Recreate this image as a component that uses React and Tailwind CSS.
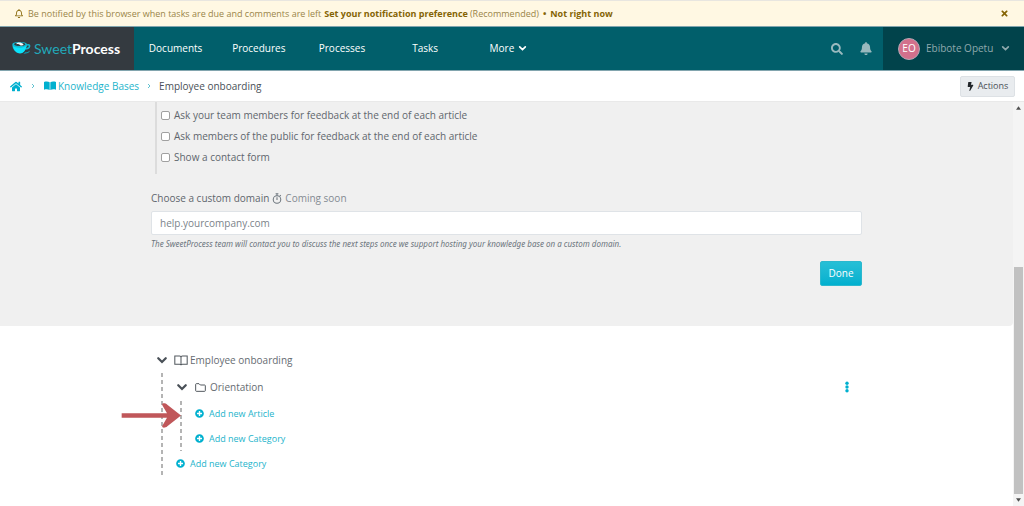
import React from 'react';
import { FaHome, FaSearch, FaBell, FaRegBell, FaPlusCircle, FaBolt, FaTimes } from 'react-icons/fa';

const NAV = ['Documents', 'Procedures', 'Processes', 'Tasks'];

const FEEDBACK_OPTIONS = [
  { id: 'team', label: 'Ask your team members for feedback at the end of each article' },
  { id: 'public', label: 'Ask members of the public for feedback at the end of each article' },
  { id: 'contact', label: 'Show a contact form' },
];

function CupLogo() {
  return (
    <svg viewBox="0 0 54 42" className="w-[19px] h-[15px]">
      <path d="M1 8C4 1 40 1 43 9c6-2 10 1 9 6-1 6-8 9-14 9-4 6-9 10-15 10C9 34 0 20 1 8z" fill="#12b9d2" />
      <path d="M3 14c8 7 29 6 38-1-2 14-9 22-18 22C12 35 5 26 3 14z" fill="#0be3fb" />
      <path d="M43 13c4-1 5 1 4 3-1 2-4 3-7 4z" fill="#343a40" />
      <ellipse cx="22" cy="9" rx="16" ry="5" fill="#343a40" />
      <path d="M12 8c4-6 14-5 21 1-3 5-9 4-11 1-3-2-7-1-10-2z" fill="#f4fbfc" />
      <path d="M38 32c5 0 9-1 13-5-1 6-8 9-19 9z" fill="#12a0b5" />
    </svg>
  );
}

function ChevronDown({ className }) {
  return (
    <svg viewBox="0 0 16 12" className={className} fill="none" stroke="currentColor" strokeWidth="3" strokeLinecap="round">
      <path d="M3 3l5 5 5-5" />
    </svg>
  );
}

function ChevronRight() {
  return (
    <svg viewBox="0 0 8 12" className="w-1 h-[6px] mx-2" fill="none" stroke="#62c2d0" strokeWidth="2">
      <path d="M2 2l4 4-4 4" />
    </svg>
  );
}

function BookSolid() {
  return (
    <svg viewBox="0 0 36 28" className="w-3 h-[10px]" fill="#00b0cf">
      <path d="M0 2c6-2 13-2 17 1v23c-5-3-11-3-17-1z" />
      <path d="M36 2c-6-2-13-2-17 1v23c5-3 11-3 17-1z" />
    </svg>
  );
}

function BookOutline() {
  return (
    <svg viewBox="0 0 40 32" className="w-[14px] h-[11px]" fill="none" stroke="#52585e" strokeWidth="3">
      <path d="M2 3h14c2 0 4 2 4 4 0-2 2-4 4-4h14v24H24c-2 0-4 1-4 3 0-2-2-3-4-3H2zM20 7v23" />
    </svg>
  );
}

function FolderOutline() {
  return (
    <svg viewBox="0 0 33 27" className="w-[11px] h-[9px]" fill="none" stroke="#52585e" strokeWidth="3" strokeLinejoin="round">
      <path d="M2 23V4c0-1 1-2 2-2h8l4 4h13c1 0 2 1 2 2v15c0 1-1 2-2 2H4c-1 0-2-1-2-2z" />
    </svg>
  );
}

function Stopwatch() {
  return (
    <svg viewBox="0 0 28 32" className="w-[10px] h-[11px]" fill="none" stroke="#6c757d" strokeWidth="3">
      <circle cx="14" cy="19" r="11" />
      <path d="M10 2h8M14 2v6M14 12v8M22 9l3-3" />
    </svg>
  );
}

function ScrollArrow({ up }) {
  return (
    <svg viewBox="0 0 6 4" className="w-[5px] h-1" fill="#505050">
      <path d={up ? 'M0 4l3-4 3 4z' : 'M0 0l3 4 3-4z'} />
    </svg>
  );
}

function AddLink({ children }) {
  return (
    <a href="#add" className="flex items-center gap-[5px] h-[25px] text-[9px] text-[#1db4cb]">
      <FaPlusCircle className="w-[9px] h-[9px] text-[#00b0cf]" />
      {children}
    </a>
  );
}

function DashedBranch({ children }) {
  return (
    <div className="relative pl-[15px] ml-[10px]">
      <svg className="absolute left-0 top-0 w-[2px] h-full" aria-hidden="true">
        <line x1="1" y1="0" x2="1" y2="100%" stroke="#b4b4b4" strokeWidth="2" strokeDasharray="4 3" />
      </svg>
      {children}
    </div>
  );
}

function TopBanner() {
  return (
    <div className="flex items-center justify-between h-[26px] pl-[15px] pr-4 bg-[#fff8e3] border-t border-[#e8e6e0] text-[9px] text-[#9a8548]">
      <div className="flex items-center whitespace-nowrap">
        <FaRegBell className="w-2 h-[9px] mr-[5px] text-[#856404]" />
        <span>Be notified by this browser when tasks are due and comments are left</span>
        <a href="#preference" className="ml-[3px] font-bold text-[#856404]">Set your notification preference</a>
        <span className="ml-[2px]">(Recommended)</span>
        <span className="mx-1 font-bold text-[#856404]">•</span>
        <a href="#later" className="font-bold text-[#856404]">Not right now</a>
      </div>
      <button aria-label="Close">
        <FaTimes className="w-[7px] h-[9px] text-[#856404]" />
      </button>
    </div>
  );
}

function Header() {
  return (
    <header className="flex h-[45px] bg-[#015f6b] border-y border-[#82a5ae] text-white">
      <a href="#home" className="flex items-center gap-[3px] w-[134px] pl-3 bg-[#343a40]">
        <CupLogo />
        <span className="font-[Lato] text-[14px] text-[#22a9ba]">
          Sweet<b className="font-bold text-white">Process</b>
        </span>
      </a>
      <nav className="grid grid-cols-5 w-[416px] font-medium">
        {NAV.map((n) => (
          <a key={n} href={`#${n}`} className="flex items-center justify-center">{n}</a>
        ))}
        <button className="flex items-center justify-center gap-1">
          More
          <ChevronDown className="w-[9px] h-[7px]" />
        </button>
      </nav>
      <div className="flex items-center gap-[17px] ml-auto mr-[11px] text-[#99b9be]">
        <button aria-label="Search"><FaSearch className="w-3 h-3" /></button>
        <button aria-label="Notifications"><FaBell className="w-3 h-[13px]" /></button>
      </div>
      <button className="flex items-center w-[141px] pl-[15px] bg-[#01434b] text-[#8fa9ad]">
        <span className="flex items-center justify-center w-[22px] h-[22px] mr-[6px] rounded-full bg-[#d3708c] border border-[#b5a7b4] text-white">EO</span>
        Ebibote Opetu
        <ChevronDown className="w-[9px] h-[7px] ml-2" />
      </button>
    </header>
  );
}

function Breadcrumbs() {
  return (
    <div className="flex items-center justify-between h-[31px] pl-[10px] pr-[9px] border-b border-[#e9e9e9]">
      <div className="flex items-center">
        <a href="#home" aria-label="Home"><FaHome className="w-3 h-[11px] text-[#00b0cf]" /></a>
        <span className="mx-px"><ChevronRight /></span>
        <a href="#kb" className="flex items-center gap-[2px] text-[#1db4cb]">
          <BookSolid />
          Knowledge Bases
        </a>
        <ChevronRight />
        <span className="font-medium text-[#495057]">Employee onboarding</span>
      </div>
      <button className="flex items-center justify-center gap-1 w-[55px] h-[21px] rounded-[2px] bg-[#e9ecef] border border-[#dde1e5] text-[9px] text-[#495057]">
        <FaBolt className="w-[7px] h-[9px] text-[#212529]" />
        Actions
      </button>
    </div>
  );
}

function Settings() {
  return (
    <section className="h-[224px] bg-[#f0f0f0] rounded-br">
      <div className="w-full max-w-[711px] mx-auto text-[#5f666d]">
        <div className="ml-1 pl-1 h-[72px] pt-[3px] border-l-2 border-[#dcdcdc]">
          {FEEDBACK_OPTIONS.map((o) => (
            <div key={o.id} className="flex items-center gap-1 h-[21px]">
              <input id={o.id} type="checkbox" className="appearance-none w-[9px] h-[9px] bg-white border border-[#a0a0a0] rounded-[2px]" />
              <label htmlFor={o.id}>{o.label}</label>
            </div>
          ))}
        </div>
        <label htmlFor="domain" className="flex items-center h-4 mt-4 mb-[5px]">
          Choose a custom domain
          <span className="flex items-center gap-[3px] ml-[3px] text-[#848b92]">
            <Stopwatch />
            Coming soon
          </span>
        </label>
        <input
          id="domain"
          type="text"
          placeholder="help.yourcompany.com"
          className="block w-full h-[24px] px-2 bg-white border border-[#dfe3e7] rounded-[2px] placeholder:text-[#7b838a]"
        />
        <p className="h-4 mt-[1px] leading-4 font-['Noto_Sans',sans-serif] text-[8px] italic text-[#6c757d]">
          The SweetProcess team will contact you to discuss the next steps once we support hosting your knowledge base on a custom domain.
        </p>
        <div className="flex justify-end mt-[9px]">
          <button className="w-[42px] h-[25px] rounded-[2px] border border-[#2bb8ce] bg-linear-to-b from-[#26bfd6] to-[#00b0cf] text-white">Done</button>
        </div>
      </div>
    </section>
  );
}

function Tree() {
  return (
    <section className="w-full max-w-[711px] mx-auto pt-[21px] text-[#666c72]">
      <div className="flex items-center h-[26px] ml-[5px]">
        <ChevronDown className="w-3 h-[9px] mr-[6px] text-[#495057]" />
        <BookOutline />
        <span className="ml-[2px]">Employee onboarding</span>
      </div>
      <DashedBranch>
        <div className="flex items-center h-[28px]">
          <ChevronDown className="w-3 h-[9px] mr-[7px] text-[#495057]" />
          <FolderOutline />
          <span className="ml-1">Orientation</span>
          <button aria-label="More options" className="ml-auto mr-[13px]">
            <svg viewBox="0 0 4 12" className="w-1 h-3" fill="#00b0cf">
              <circle cx="2" cy="2.300" r="1.700" />
              <circle cx="2" cy="6" r="1.700" />
              <circle cx="2" cy="9.700" r="1.700" />
            </svg>
          </button>
        </div>
        <div className="relative -ml-[6px]">
          <DashedBranch>
            <AddLink>Add new Article</AddLink>
            <AddLink>Add new Category</AddLink>
          </DashedBranch>
          <svg viewBox="0 0 180 74" className="absolute -left-[49px] top-[2px] w-[60px] h-[25px]" aria-hidden="true">
            <path d="M2 30h136L124 6c-3-7 9-7 15-1l41 32-41 32c-6 6-18 6-15-1l14-24H2z" fill="#c0575a" />
          </svg>
        </div>
        <AddLink>Add new Category</AddLink>
      </DashedBranch>
    </section>
  );
}

export default function App() {
  return (
    <div className="flex flex-col h-screen overflow-hidden bg-white font-['Open_Sans','Noto_Sans',sans-serif] text-[10px]">
      <TopBanner />
      <Header />
      <Breadcrumbs />
      <div className="flex flex-1 min-h-0">
        <main className="flex-1 min-w-0 overflow-hidden">
          <Settings />
          <Tree />
        </main>
        <div className="flex flex-col items-center w-[11px] py-1 bg-[#f4f4f4]" aria-hidden="true">
          <ScrollArrow up />
          <div className="flex-[157]" />
          <div className="flex-[228] w-[9px] bg-[#c1c1c1]" />
          <div className="h-1" />
          <ScrollArrow />
        </div>
      </div>
    </div>
  );
}
